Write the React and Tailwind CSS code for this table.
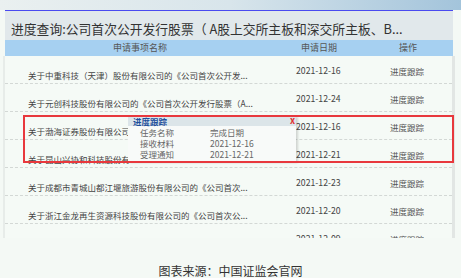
import React from 'react';

const rows = [
  { name: '关于中重科技（天津）股份有限公司的《公司首次公开发...', date: '2021-12-16' },
  { name: '关于元创科技股份有限公司的《公司首次公开发行股票（A...', date: '2021-12-24' },
  { name: '关于渤海证券股份有限公司', date: '2021-12-16' },
  { name: '关于昆山兴协和科技股份有', date: '2021-12-21' },
  { name: '关于成都市青城山都江堰旅游股份有限公司的《公司首次...', date: '2021-12-23' },
  { name: '关于浙江金龙再生资源科技股份有限公司的《公司首次公...', date: '2021-12-20' },
  { name: '', date: '2021-12-09' },
];

export default function App() {
  return (
    <div className="relative w-[461px] h-[278px] overflow-hidden bg-[#f4f9f5] font-['Noto_Sans_CJK_SC',sans-serif]">
      {/* blurred banner strip */}
      <div className="h-[10px] bg-gradient-to-r from-[#eaf0f0] via-[#d8e5eb] to-[#a3c4db]" />

      <div className="w-[448px] ml-[5px]">
        {/* Title */}
        <div className="h-[30px] border-t border-[#4a4af0] bg-[#e1e8eb] pl-[6px] pt-[11px] text-[12.8px] leading-[14px] text-[#333] whitespace-nowrap overflow-hidden">
          进度查询:公司首次公开发行股票（ A股上交所主板和深交所主板、B...
        </div>

        {/* Table header */}
        <div className="flex h-[16px] items-center bg-[#a6d0f1] text-[9px] text-[#555]">
          <div className="w-[270px] text-center">申请事项名称</div>
          <div className="w-[88px] text-center">申请日期</div>
          <div className="w-[90px] text-center">操作</div>
        </div>
      </div>

      {/* Table body */}
      <div className="ml-[3px] w-[452px] h-[182px] overflow-hidden border-l-2 border-r-[3px] border-l-[#e7ece9] border-r-[#e2e6e4] bg-[#f5faf6]">
        {rows.map((r, i) => (
          <div key={i} className="flex h-[28px] border-b border-dashed border-[#d3d8d5] text-[8.5px] leading-[12px] text-[#444] whitespace-nowrap">
            <div className="w-[270px] pl-[23px] pt-[13px] overflow-hidden">{r.name}</div>
            <div className="w-[88px] pt-[9px] text-center text-[8.7px]">{r.date}</div>
            <div className="w-[90px] pt-[9px] text-center text-[#555]">进度跟踪</div>
          </div>
        ))}
      </div>

      {/* Caption */}
      <div className="mt-[26px] text-center text-[12px] leading-[14px] text-[#333]">
        图表来源：中国证监会官网
      </div>

      {/* Progress popup */}
      <div className="absolute left-[128px] top-[116px] w-[168px] h-[46px] bg-[#f8faf9] shadow-[2px_1px_2px_rgba(0,0,0,0.15)] text-[8.5px] leading-[11px] text-[#666]">
        <div className="relative h-[10px] bg-[#dce5e9] pl-[5px] font-bold text-[#1d4f9c] leading-[10px]">
          进度跟踪
          <span className="absolute right-[1px] top-[0px] text-[9px] font-bold text-[#e23030] leading-[10px]">x</span>
        </div>
        <div className="pt-[1px]">
          <div className="flex"><span className="w-[82px] pl-[12px]">任务名称</span><span>完成日期</span></div>
          <div className="flex"><span className="w-[82px] pl-[12px]">接收材料</span><span>2021-12-16</span></div>
          <div className="flex"><span className="w-[82px] pl-[12px]">受理通知</span><span>2021-12-21</span></div>
        </div>
      </div>

      {/* Highlight box */}
      <div className="absolute left-[23px] top-[115px] w-[431px] h-[48px] border-2 border-[#e8383d]" />
    </div>
  );
}
